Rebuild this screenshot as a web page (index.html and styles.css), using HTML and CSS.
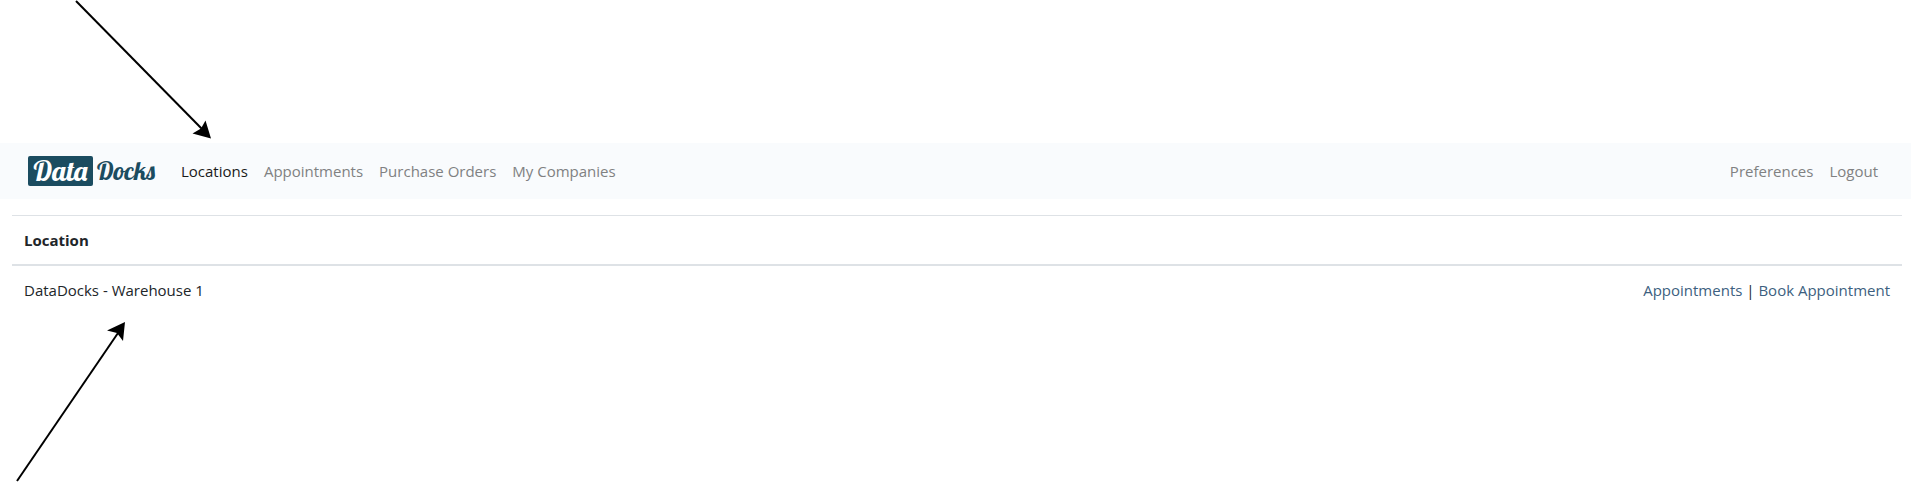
FILE: index.html
```html
<!DOCTYPE html>
<html lang="en">
<head>
<meta charset="utf-8">
<title>DataDocks - Locations</title>
<link rel="stylesheet" href="styles.css">
</head>
<body>
<header class="navbar">
  <a class="brand" href="#" aria-label="DataDocks"><span class="brand-box">Data</span><span class="brand-rest">Docks</span></a>
  <nav class="nav">
    <a class="nav-link active" href="#">Locations</a>
    <a class="nav-link" href="#">Appointments</a>
    <a class="nav-link" href="#">Purchase Orders</a>
    <a class="nav-link" href="#">My Companies</a>
  </nav>
  <nav class="nav nav-end">
    <a class="nav-link" href="#">Preferences</a>
    <a class="nav-link" href="#">Logout</a>
  </nav>
</header>
<main class="content">
  <table class="table">
    <thead>
      <tr><th scope="col">Location</th><th></th></tr>
    </thead>
    <tbody>
      <tr>
        <td>DataDocks - Warehouse 1</td>
        <td class="actions"><a href="#">Appointments</a> | <a href="#">Book Appointment</a></td>
      </tr>
    </tbody>
  </table>
</main>
<svg class="arrow arrow-nav" width="140" height="140" viewBox="0 0 140 140" aria-hidden="true">
  <path d="M1 1L128 130" stroke="#000" stroke-width="2"/>
  <path d="M136 138.500L130.500 120.500L126 128.500L117.500 133.500Z"/>
</svg>
<svg class="arrow arrow-row" width="112" height="164" viewBox="0 0 112 164" aria-hidden="true">
  <path d="M1 161L102 13" stroke="#000" stroke-width="2"/>
  <path d="M109 2L91 10.500L101 13L107 21Z"/>
</svg>
</body>
</html>
```
FILE: styles.css
```css
* {
  box-sizing: border-box;
}

body {
  margin: 0;
  padding-top: 143px;
  background: #fff;
  color: #212529;
  font-family: "Segoe UI", "Open Sans", "Noto Sans", sans-serif;
  font-size: 15px;
  line-height: 24px;
}

a {
  text-decoration: none;
}

.navbar {
  display: flex;
  align-items: center;
  height: 56px;
  padding: 0 33px 0 28px;
  background: #f9fbfd;
}

.brand {
  display: flex;
  align-items: center;
  gap: 4px;
  margin-right: 24px;
  color: #1b4c60;
  font-family: "Lobster", "Liberation Serif", serif;
  font-size: 25px;
  font-weight: 400;
  line-height: 30px;
}

.brand-box {
  width: 65px;
  border-radius: 2px;
  background: #1b4c60;
  color: #fff;
  font-size: 28px;
  text-align: center;
}

.brand-rest {
  width: 60px;
}

.nav {
  display: flex;
  gap: 16px;
}

.nav-end {
  margin-left: auto;
}

.nav-link {
  color: #808182;
}

.nav-link.active {
  color: #191a1a;
}

.content {
  padding: 16px 9px 0 12px;
}

.table {
  width: 100%;
  border-collapse: separate;
  border-spacing: 0;
}

.table th,
.table td {
  padding: 12px;
  text-align: left;
}

.table th {
  border-top: 1px solid #dee2e6;
  border-bottom: 2px solid #dee2e6;
  font-weight: 700;
}

.table .actions {
  text-align: right;
}

.actions a {
  color: #3d5f80;
}

.arrow {
  position: absolute;
  pointer-events: none;
}

.arrow-nav {
  top: 0;
  left: 75px;
}

.arrow-row {
  top: 320px;
  left: 16px;
}
```
